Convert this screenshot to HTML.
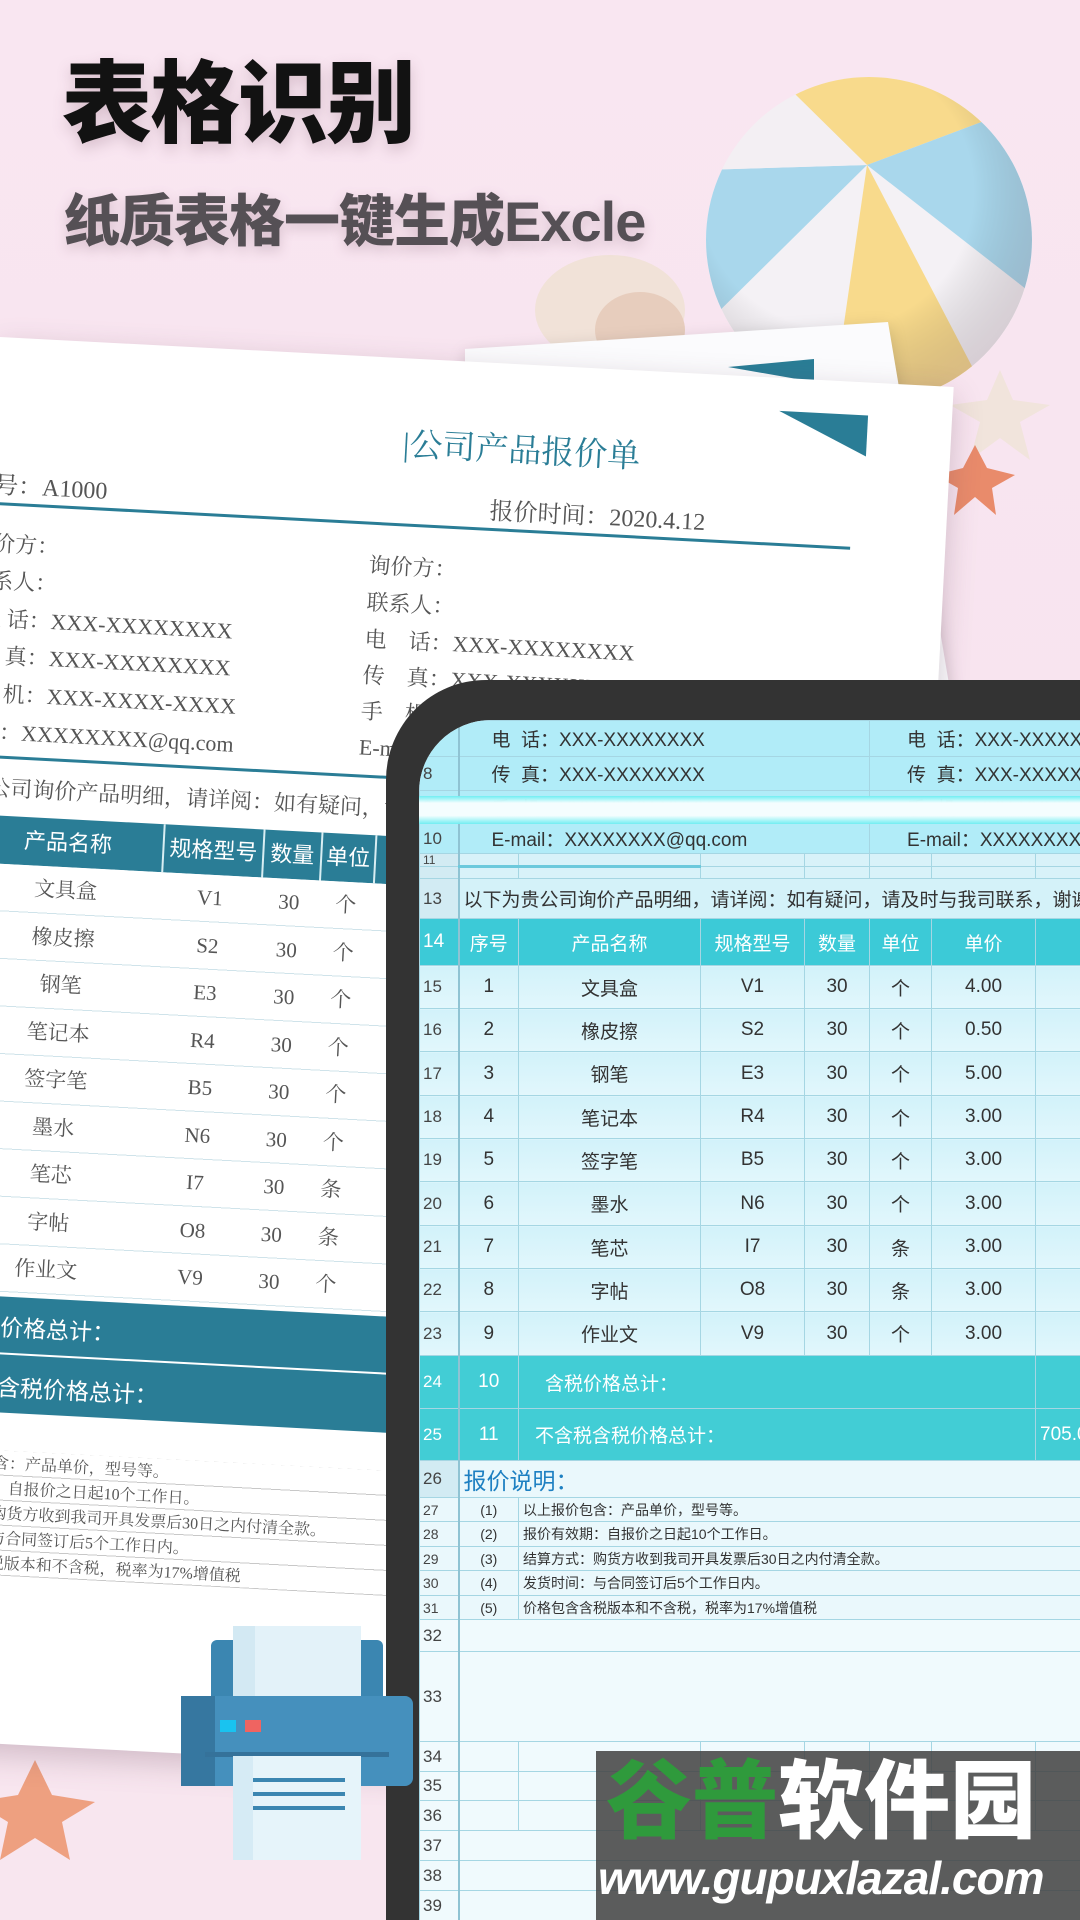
<!DOCTYPE html>
<html style="overflow:hidden"><head><meta charset="utf-8">
<style>
*{margin:0;padding:0;box-sizing:border-box}
body{width:1080px;height:1920px;overflow:hidden;position:relative;background:linear-gradient(180deg,#f9e6f1 0%,#f7e3ee 60%,#f8e6ef 100%);font-family:"Liberation Sans","Noto Sans CJK SC",sans-serif}
.abs{position:absolute}
.t1{left:62px;top:56px;font:900 90px/1.1 "Liberation Sans","Noto Sans CJK SC",sans-serif;color:#121212;letter-spacing:-2px;text-shadow:0 6px 14px rgba(120,80,100,.25)}
.t2{left:64px;top:188px;font:900 56px/1.2 "Liberation Sans","Noto Sans CJK SC",sans-serif;color:#555055;letter-spacing:-1px;text-shadow:0 5px 12px rgba(120,80,100,.25)}
.paper{left:0;top:337px;width:955px;height:1405px;background:#fff;transform:rotate(3deg);transform-origin:0 0;box-shadow:0 10px 30px rgba(90,60,80,.25);font-family:"Liberation Serif","Noto Serif CJK SC",serif;color:#555;overflow:hidden}
.paper .p{position:absolute;white-space:nowrap;font-size:22px}
.ph{background:#2a7d96;color:#fff;font-family:"Liberation Sans","Noto Sans CJK SC",sans-serif}
.phone{left:386px;top:680px;width:694px;height:1240px;background:#333;border-top-left-radius:100px}
.screen{left:419px;top:720px;width:661px;height:1200px;border-top-left-radius:72px;overflow:hidden;background:#eef9fc}
table{border-collapse:collapse;table-layout:fixed;width:676px;font-family:"Liberation Sans","Noto Sans CJK SC",sans-serif}
td{border:1px solid #a5d6e3;color:#333;font-size:19px;text-align:center;white-space:nowrap;overflow:hidden;padding:0}
td.rn{text-align:left;padding-left:3px;font-size:17px;color:#444;background:#d2ebf3;border-right:2px solid #8fc3d3}
tr.top td{background:#b1ecf8}
td.l{text-align:left}
tr.hd td{background:#3ccad7;color:#fff;font-size:19px}
tr.d td{background:linear-gradient(#d2f2fa,#e2f7fc)}
tr.tot td{background:#42cdd5;color:#fff}
tr.n td{font-size:14px;background:#eaf8fc}
tr.e td{background:#f0fafd}
</style></head><body>

<svg class="abs" style="left:0;top:0" width="1080" height="760">
<defs><clipPath id="bc"><circle cx="869" cy="240" r="163"/></clipPath>
<radialGradient id="sh" cx="0.4" cy="0.35" r="0.7"><stop offset="0.6" stop-color="#000" stop-opacity="0"/><stop offset="1" stop-color="#806070" stop-opacity="0.25"/></radialGradient></defs>
<ellipse cx="610" cy="310" rx="75" ry="55" fill="#f1e2d8"/>
<ellipse cx="640" cy="330" rx="45" ry="38" fill="#e7cdbd"/>
<g clip-path="url(#bc)">
<rect x="700" y="70" width="340" height="340" fill="#f4f1f5"/>
<polygon points="867,165 740,40 1000,40 1040,100" fill="#f8da8c"/>
<polygon points="867,165 1040,100 1040,300" fill="#a9d7ec"/>
<polygon points="867,165 830,420 1000,420" fill="#f8da8c"/>
<polygon points="867,165 700,330 700,170" fill="#a9d7ec"/>
<polygon points="867,165 700,170 740,40" fill="#f3eff3"/>
<circle cx="869" cy="240" r="163" fill="url(#sh)"/>
</g>
<polygon points="1000,370 1013,400 1050,405 1020,422 1030,460 1000,438 970,460 980,422 950,405 987,400" fill="#f1e4dc"/>
<polygon points="975,445 987,468 1015,475 992,488 996,515 975,497 954,515 958,488 935,475 963,468" fill="#e98b6b"/>
<polygon points="465,349 888,322 950,690 465,700" fill="#fbfbfd" style="filter:drop-shadow(0 4px 8px rgba(0,0,0,.15))"/>
<polygon points="728,367 814,359 814,382" fill="#2a7d96"/>
</svg>

<div class="abs t1">表格识别</div>
<div class="abs t2">纸质表格一键生成Excle</div>

<svg class="abs" style="left:0;top:1740px" width="160" height="140">
<polygon points="35,20 52,55 95,62 62,82 70,120 35,98 0,120 8,82 -25,62 18,55" fill="#eea080"/>
</svg>

<div class="abs paper">
<div class="p" style="left:408px;top:60px;font-size:33px;color:#2a7d96">|公司产品报价单</div>
<div style="position:absolute;left:782px;top:33px;width:0;height:0;border-top:41px solid #2a7d96;border-left:89px solid transparent"></div>
<div class="p" style="left:-22px;top:128px;font-size:24px">单号：A1000</div>
<div class="p" style="left:498px;top:128px;font-size:24px">报价时间：2020.4.12</div>
<div style="position:absolute;left:0;top:165px;width:860px;height:3px;background:#2a7d96"></div>
<div class="p" style="left:-18px;top:190px">询价方：</div>
<div class="p" style="left:-18px;top:227px">联系人：</div>
<div class="p" style="left:-6px;top:265px">电 话：XXX-XXXXXXXX</div>
<div class="p" style="left:-6px;top:302px">传 真：XXX-XXXXXXXX</div>
<div class="p" style="left:-6px;top:340px">手 机：XXX-XXXX-XXXX</div>
<div class="p" style="left:-40px;top:378px">E-mail：XXXXXXXX@qq.com</div>
<div class="p" style="left:380px;top:192px">询价方：</div>
<div class="p" style="left:380px;top:229px">联系人：</div>
<div class="p" style="left:380px;top:266px">电　话：XXX-XXXXXXXX</div>
<div class="p" style="left:380px;top:302px">传　真：XXX-XXXXXXXX</div>
<div class="p" style="left:380px;top:338px">手　机：XXX-XXXX-XXXX</div>
<div class="p" style="left:380px;top:374px">E-mail：XXXXXXXX@qq.com</div>
<div style="position:absolute;left:0;top:418px;width:860px;height:3px;background:#2a7d96"></div>
<div class="p" style="left:-10px;top:434px">贵公司询价产品明细，请详阅：如有疑问，请及时与我司联系，谢谢！</div>
<div class="ph" style="position:absolute;left:0;top:478px;width:955px;height:48px"></div>
<div class="p" style="left:0;top:478px;width:189px;height:48px;line-height:48px;text-align:center;color:#fff;font-family:'Liberation Sans','Noto Sans CJK SC',sans-serif">产品名称</div>
<div class="p" style="left:189px;top:478px;width:100px;height:48px;line-height:48px;text-align:center;color:#fff;border-left:2px solid #d8eef3;font-family:'Liberation Sans','Noto Sans CJK SC',sans-serif">规格型号</div>
<div class="p" style="left:289px;top:478px;width:58px;height:48px;line-height:48px;text-align:center;color:#fff;border-left:2px solid #d8eef3;font-family:'Liberation Sans','Noto Sans CJK SC',sans-serif">数量</div>
<div class="p" style="left:347px;top:478px;width:56px;height:48px;line-height:48px;text-align:center;color:#fff;border-left:2px solid #d8eef3;border-right:2px solid #d8eef3;font-family:'Liberation Sans','Noto Sans CJK SC',sans-serif">单位</div>
<div style="position:absolute;left:0;top:526px;width:955px;height:428px;background:repeating-linear-gradient(180deg,#fff 0,#fff 46.5px,#cfe3ea 46.5px,#cfe3ea 47.5px)"></div>
<div style="position:absolute;left:0;top:526px;font-size:21px;line-height:47.5px;color:#555">
<div style="display:flex"><span style="width:189px;text-align:center">文具盒</span><span style="width:100px;text-align:center">V1</span><span style="width:58px;text-align:center">30</span><span style="width:56px;text-align:center">个</span></div>
<div style="display:flex"><span style="width:189px;text-align:center">橡皮擦</span><span style="width:100px;text-align:center">S2</span><span style="width:58px;text-align:center">30</span><span style="width:56px;text-align:center">个</span></div>
<div style="display:flex"><span style="width:189px;text-align:center">钢笔</span><span style="width:100px;text-align:center">E3</span><span style="width:58px;text-align:center">30</span><span style="width:56px;text-align:center">个</span></div>
<div style="display:flex"><span style="width:189px;text-align:center">笔记本</span><span style="width:100px;text-align:center">R4</span><span style="width:58px;text-align:center">30</span><span style="width:56px;text-align:center">个</span></div>
<div style="display:flex"><span style="width:189px;text-align:center">签字笔</span><span style="width:100px;text-align:center">B5</span><span style="width:58px;text-align:center">30</span><span style="width:56px;text-align:center">个</span></div>
<div style="display:flex"><span style="width:189px;text-align:center">墨水</span><span style="width:100px;text-align:center">N6</span><span style="width:58px;text-align:center">30</span><span style="width:56px;text-align:center">个</span></div>
<div style="display:flex"><span style="width:189px;text-align:center">笔芯</span><span style="width:100px;text-align:center">I7</span><span style="width:58px;text-align:center">30</span><span style="width:56px;text-align:center">条</span></div>
<div style="display:flex"><span style="width:189px;text-align:center">字帖</span><span style="width:100px;text-align:center">O8</span><span style="width:58px;text-align:center">30</span><span style="width:56px;text-align:center">条</span></div>
<div style="display:flex"><span style="width:189px;text-align:center">作业文</span><span style="width:100px;text-align:center">V9</span><span style="width:58px;text-align:center">30</span><span style="width:56px;text-align:center">个</span></div>
</div>
<div class="ph" style="position:absolute;left:0;top:958px;width:955px;height:56px"></div>
<div class="ph" style="position:absolute;left:0;top:1016px;width:955px;height:58px"></div>
<div class="p" style="left:6px;top:970px;color:#fff;font-size:23px;font-family:'Liberation Sans','Noto Sans CJK SC',sans-serif">含税价格总计：</div>
<div class="p" style="left:6px;top:1030px;color:#fff;font-size:23px;font-family:'Liberation Sans','Noto Sans CJK SC',sans-serif">含税含税价格总计：</div>
<div class="p" style="left:-45px;top:1082px;color:#2a8ab8;font-size:24px;font-family:'Liberation Sans','Noto Sans CJK SC',sans-serif">说明：</div>
<div style="position:absolute;left:0;top:1112px;width:955px;height:125px;background:repeating-linear-gradient(180deg,#fff 0,#fff 24px,#c8c8c8 24px,#c8c8c8 25px)"></div>
<div class="p" style="left:20px;top:1113px;font-size:16px;line-height:25px">
价包含：产品单价，型号等。<br>效期：自报价之日起10个工作日。<br>式：购货方收到我司开具发票后30日之内付清全款。<br>间：与合同签订后5个工作日内。<br>含含税版本和不含税，税率为17%增值税</div>
</div>

<div class="abs phone"></div>
<div class="abs screen">
<table>
<colgroup><col style="width:39px"><col style="width:60px"><col style="width:182px"><col style="width:104px"><col style="width:65px"><col style="width:62px"><col style="width:104px"><col style="width:60px"></colgroup>
<tr class="top" style="height:36px"><td class="rn"></td><td colspan="4" class="l" style="padding-left:32px">电&nbsp;&nbsp;话：XXX-XXXXXXXX</td><td colspan="3" class="l" style="padding-left:37px">电&nbsp;&nbsp;话：XXX-XXXXX</td></tr>
<tr class="top" style="height:34px"><td class="rn">8</td><td colspan="4" class="l" style="padding-left:32px">传&nbsp;&nbsp;真：XXX-XXXXXXXX</td><td colspan="3" class="l" style="padding-left:37px">传&nbsp;&nbsp;真：XXX-XXXXX</td></tr>
<tr class="top" style="height:33px"><td class="rn">9</td><td colspan="4" class="l" style="padding-left:32px">手&nbsp;&nbsp;机：XXX-XXXX-XXXX</td><td colspan="3" class="l" style="padding-left:37px">手&nbsp;&nbsp;机：XXX-XXXX</td></tr>
<tr class="top" style="height:30px"><td class="rn">10</td><td colspan="4" class="l" style="padding-left:32px">E-mail：XXXXXXXX@qq.com</td><td colspan="3" class="l" style="padding-left:37px">E-mail：XXXXXXXX</td></tr>
<tr style="height:13px;background:#d8f2f9"><td class="rn" style="font-size:12px;line-height:12px">11</td><td></td><td></td><td></td><td></td><td></td><td></td><td></td></tr>
<tr style="height:12px;background:#d8f2f9"><td class="rn" style="font-size:10px"></td><td style="border-top:3px solid #6cc9dc"></td><td style="border-top:3px solid #6cc9dc"></td><td></td><td></td><td></td><td></td><td></td></tr>
<tr style="height:40px;background:#d4f2f9"><td class="rn">13</td><td colspan="7" class="l" style="padding-left:4px">以下为贵公司询价产品明细，请详阅：如有疑问，请及时与我司联系，谢谢！</td></tr>
<tr class="hd" style="height:47px"><td class="rn">14</td><td>序号</td><td>产品名称</td><td>规格型号</td><td>数量</td><td>单位</td><td>单价</td><td></td></tr>
<tr class="d" style="height:43px"><td class="rn">15</td><td>1</td><td>文具盒</td><td>V1</td><td>30</td><td>个</td><td>4.00</td><td></td></tr>
<tr class="d" style="height:43px"><td class="rn">16</td><td>2</td><td>橡皮擦</td><td>S2</td><td>30</td><td>个</td><td>0.50</td><td></td></tr>
<tr class="d" style="height:44px"><td class="rn">17</td><td>3</td><td>钢笔</td><td>E3</td><td>30</td><td>个</td><td>5.00</td><td></td></tr>
<tr class="d" style="height:43px"><td class="rn">18</td><td>4</td><td>笔记本</td><td>R4</td><td>30</td><td>个</td><td>3.00</td><td></td></tr>
<tr class="d" style="height:43px"><td class="rn">19</td><td>5</td><td>签字笔</td><td>B5</td><td>30</td><td>个</td><td>3.00</td><td></td></tr>
<tr class="d" style="height:44px"><td class="rn">20</td><td>6</td><td>墨水</td><td>N6</td><td>30</td><td>个</td><td>3.00</td><td></td></tr>
<tr class="d" style="height:43px"><td class="rn">21</td><td>7</td><td>笔芯</td><td>I7</td><td>30</td><td>条</td><td>3.00</td><td></td></tr>
<tr class="d" style="height:43px"><td class="rn">22</td><td>8</td><td>字帖</td><td>O8</td><td>30</td><td>条</td><td>3.00</td><td></td></tr>
<tr class="d" style="height:44px"><td class="rn">23</td><td>9</td><td>作业文</td><td>V9</td><td>30</td><td>个</td><td>3.00</td><td></td></tr>
<tr class="tot" style="height:53px"><td class="rn">24</td><td>10</td><td colspan="5" class="l" style="padding-left:26px">含税价格总计：</td><td></td></tr>
<tr class="tot" style="height:52px"><td class="rn">25</td><td>11</td><td colspan="5" class="l" style="padding-left:16px">不含税含税价格总计：</td><td class="l" style="padding-left:4px">705.00</td></tr>
<tr style="height:37px;background:#eaf8fc"><td class="rn">26</td><td colspan="7" class="l" style="padding-left:4px;color:#1e80c2;font-size:23px">报价说明：</td></tr>
<tr class="n" style="height:24px"><td class="rn">27</td><td>(1)</td><td colspan="6" class="l" style="padding-left:4px">以上报价包含：产品单价，型号等。</td></tr>
<tr class="n" style="height:25px"><td class="rn">28</td><td>(2)</td><td colspan="6" class="l" style="padding-left:4px">报价有效期：自报价之日起10个工作日。</td></tr>
<tr class="n" style="height:24px"><td class="rn">29</td><td>(3)</td><td colspan="6" class="l" style="padding-left:4px">结算方式：购货方收到我司开具发票后30日之内付清全款。</td></tr>
<tr class="n" style="height:25px"><td class="rn">30</td><td>(4)</td><td colspan="6" class="l" style="padding-left:4px">发货时间：与合同签订后5个工作日内。</td></tr>
<tr class="n" style="height:24px"><td class="rn">31</td><td>(5)</td><td colspan="6" class="l" style="padding-left:4px">价格包含含税版本和不含税，税率为17%增值税</td></tr>
<tr class="e" style="height:32px"><td class="rn">32</td><td colspan="7"></td></tr>
<tr class="e" style="height:90px"><td class="rn">33</td><td colspan="7"></td></tr>
<tr class="e" style="height:30px"><td class="rn">34</td><td></td><td></td><td></td><td></td><td></td><td></td><td></td></tr>
<tr class="e" style="height:29px"><td class="rn">35</td><td></td><td></td><td></td><td></td><td></td><td></td><td></td></tr>
<tr class="e" style="height:30px"><td class="rn">36</td><td></td><td></td><td></td><td></td><td></td><td></td><td></td></tr>
<tr class="e" style="height:30px"><td class="rn">37</td><td colspan="7"></td></tr>
<tr class="e" style="height:30px"><td class="rn">38</td><td colspan="7"></td></tr>
<tr class="e" style="height:30px"><td class="rn">39</td><td colspan="7"></td></tr>
</table>
<div class="abs" style="left:0;top:76px;width:661px;height:28px;background:linear-gradient(180deg,rgba(110,238,242,.95) 0%,#f4fdfe 25%,#f4fdfe 70%,rgba(110,238,242,.95) 100%)"></div>
</div>

<svg class="abs" style="left:175px;top:1620px" width="245" height="250">
<rect x="36" y="20" width="172" height="70" rx="6" fill="#3b86b1"/>
<rect x="58" y="6" width="128" height="80" fill="#e3f2f9"/>
<rect x="58" y="6" width="22" height="80" fill="#d3e9f3"/>
<rect x="6" y="76" width="232" height="90" rx="8" fill="#4590bd"/>
<rect x="6" y="76" width="34" height="90" fill="#3677a0"/>
<rect x="45" y="100" width="16" height="12" fill="#19c3f0"/>
<rect x="70" y="100" width="16" height="12" fill="#ef6461"/>
<rect x="30" y="132" width="184" height="5" fill="#35729a"/>
<rect x="58" y="136" width="128" height="104" fill="#e6f4fa"/>
<rect x="58" y="136" width="20" height="104" fill="#d6ebf5"/>
<rect x="78" y="158" width="92" height="4" fill="#3b86b1"/>
<rect x="78" y="172" width="92" height="4" fill="#3b86b1"/>
<rect x="78" y="186" width="92" height="4" fill="#3b86b1"/>
</svg>

<div class="abs" style="left:596px;top:1751px;width:484px;height:169px;background:rgba(70,70,70,.88);overflow:hidden">
<div class="abs" style="left:10px;top:4px;font:900 86px/1.1 'Liberation Sans','Noto Sans CJK SC',sans-serif;white-space:nowrap"><span style="color:#2f9a3c">谷普</span><span style="color:#fff">软件园</span></div>
<div class="abs" style="left:2px;top:102px;font:italic 900 46px/1.1 'Liberation Sans',sans-serif;color:#fff;white-space:nowrap;letter-spacing:-1px">www.gupuxlazal.com</div>
</div>
</body></html>
